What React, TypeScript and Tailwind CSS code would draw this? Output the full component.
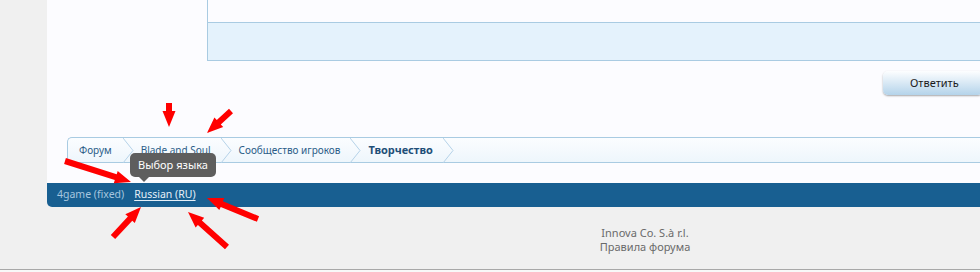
import React from "react";

type Arrow = { tx: number; ty: number; px: number; py: number };

const arrows: Arrow[] = [
  { tx: 169, ty: 103, px: 169, py: 127 },
  { tx: 231, ty: 111, px: 207, py: 133 },
  { tx: 65, ty: 161, px: 131, py: 182 },
  { tx: 258, ty: 219, px: 207, py: 198 },
  { tx: 113, ty: 237, px: 141, py: 207 },
  { tx: 227, ty: 247, px: 188, py: 212 },
];

function arrowPoints(a: Arrow) {
  const dx = a.px - a.tx;
  const dy = a.py - a.ty;
  const len = Math.sqrt(dx * dx + dy * dy);
  const ux = dx / len;
  const uy = dy / len;
  const nx = -uy;
  const ny = ux;
  const head = 16;
  const hw = 6.5;
  const sw = 3;
  const bx = a.px - ux * head;
  const by = a.py - uy * head;
  const pts = [
    [a.tx + nx * sw, a.ty + ny * sw],
    [bx + nx * sw, by + ny * sw],
    [bx + nx * hw, by + ny * hw],
    [a.px, a.py],
    [bx - nx * hw, by - ny * hw],
    [bx - nx * sw, by - ny * sw],
    [a.tx - nx * sw, a.ty - ny * sw],
  ];
  return pts.map((p) => `${p[0].toFixed(1)},${p[1].toFixed(1)}`).join(" ");
}

function Chevron() {
  return (
    <svg width="11" height="25" viewBox="0 0 11 25" className="shrink-0">
      <polyline points="0,0 10,12.5 0,25" fill="none" stroke="#b5d2e8" strokeWidth="1" />
    </svg>
  );
}

export default function App() {
  const font = { fontFamily: '"Noto Sans", "Open Sans", Arial, sans-serif' };
  return (
    <div className="relative w-[980px] h-[272px] overflow-hidden bg-[#f0f0f0]" style={font}>
      <div className="flex flex-col pl-[47px]">
        {/* main panel */}
        <div className="h-[183px] bg-[#fcfcff] flex flex-col">
          <div className="ml-[160px] h-[61px] border-l border-b border-[#a9cbe2] flex flex-col">
            <div className="h-[23px] border-b border-[#a9cbe2] bg-[#fcfcff]" />
            <div className="flex-1 bg-[#e4f2fc]" />
          </div>
          <div className="flex justify-end mt-[10px]">
            <div className="w-[100px] h-[24px] -mr-[3px] rounded-[5px] bg-gradient-to-b from-[#fdfeff] to-[#b4d3ea] shadow-[0_1px_2px_rgba(0,0,0,0.35)] flex items-center pl-[27px] text-[11px] text-[#1a1a1a]">
              Ответить
            </div>
          </div>
          <div className="ml-[20px] mt-[42px] h-[26px] border border-r-0 border-[#a9cbe2] rounded-l-[5px] bg-gradient-to-b from-[#fbfdff] to-[#eef6fc] flex items-center pl-[11px] text-[10px] text-[#2b5d88]">
            <span>Форум</span>
            <span className="ml-[11px] mr-[7px] flex"><Chevron /></span>
            <span>Blade and Soul</span>
            <span className="ml-[10px] mr-[7px] flex"><Chevron /></span>
            <span>Сообщество игроков</span>
            <span className="ml-[10px] mr-[7px] flex"><Chevron /></span>
            <span className="font-bold text-[11px] text-[#1f4f78]">Творчество</span>
            <span className="ml-[10px] flex"><Chevron /></span>
          </div>
        </div>
        {/* blue bar */}
        <div className="h-[24px] bg-[#185f91] rounded-bl-[5px] flex items-center pl-[10px] text-[10.5px]">
          <span className="text-[#a6c6df]">4game (fixed)</span>
          <span className="ml-[10px] text-[#e6f0f8] underline underline-offset-2">Russian (RU)</span>
        </div>
      </div>
      {/* footer */}
      <div className="pl-[310px] pt-[19px] flex flex-col items-center text-[11px] leading-[14px] text-[#6a6a6a]">
        <span>Innova Co. S.à r.l.</span>
        <span>Правила форума</span>
      </div>
      <div className="absolute left-0 right-0 top-[269px] h-[3px] border-t border-[#a8a8a8] bg-[#f8f8f8]" />

      {/* tooltip */}
      <div className="absolute left-[130px] top-[153px] w-[86px] h-[24px] rounded-[5px] bg-[#5e5e5e] text-white text-[11px] flex items-center justify-center">
        Выбор языка
        <div className="absolute left-[9px] top-[24px] w-0 h-0 border-l-[5px] border-r-[5px] border-t-[5px] border-l-transparent border-r-transparent border-t-[#5e5e5e]" />
      </div>

      {/* red arrows */}
      <svg className="absolute left-0 top-0" width="980" height="272">
        {arrows.map((a, i) => (
          <polygon key={i} points={arrowPoints(a)} fill="#ff0000" />
        ))}
      </svg>
    </div>
  );
}
